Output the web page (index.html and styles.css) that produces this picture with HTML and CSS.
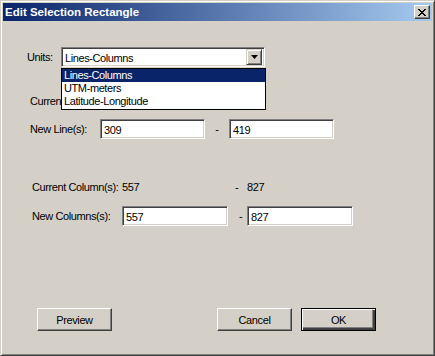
FILE: index.html
```html
<!DOCTYPE html>
<html lang="en">
  <head>
    <meta charset="UTF-8" />
    <meta name="viewport" content="width=device-width, initial-scale=1.0" />
    <title>Edit Selection Rectangle</title>
    <link rel="stylesheet" href="styles.css">
  </head>
  <body>
    <div class="window">
      <div class="titlebar">
        <span class="title">Edit Selection Rectangle</span>
        <button class="close">
          <svg width="8" height="7" viewBox="0 0 8 7">
            <path d="M0 0h2v1h1v1h2v-1h1v-1h2v1h-1v1h-1v1h-1v1h1v1h1v1h1v1h-2v-1h-1v-1h-2v1h-1v1h-2v-1h1v-1h1v-1h1v-1h-1v-1h-1v-1h-1z" fill="#000"/>
          </svg>
        </button>
      </div>

      <div class="content">
        <div class="row units-row">
          <span class="lbl units-lbl">Units:</span>
          <div class="combo">
            <div class="field combo-field">
              <span class="combo-text">Lines-Columns</span>
              <span class="combo-btn">
                <svg width="7" height="4" viewBox="0 0 7 4"><path d="M0 0h7l-3.5 4z" fill="#000"/></svg>
              </span>
            </div>
            <ul class="combo-list">
              <li class="sel">Lines-Columns</li>
              <li>UTM-meters</li>
              <li>Latitude-Longitude</li>
            </ul>
          </div>
        </div>

        <!-- ligger under den åbne liste, kun starten kan ses -->
        <div class="row info line-info">
          <span class="lbl">Current Line(s):</span>
        </div>

        <div class="row edit line-edit">
          <span class="lbl">New Line(s):</span>
          <input class="field" type="text" value="309">
          <span class="dash">-</span>
          <input class="field" type="text" value="419">
        </div>

        <div class="row info col-info">
          <span class="lbl">Current Column(s):</span>
          <span class="val">557</span>
          <span class="dash">-</span>
          <span>827</span>
        </div>

        <div class="row edit col-edit">
          <span class="lbl">New Columns(s):</span>
          <input class="field" type="text" value="557">
          <span class="dash">-</span>
          <input class="field" type="text" value="827">
        </div>

        <div class="row buttons">
          <button class="btn preview">Preview</button>
          <button class="btn cancel">Cancel</button>
          <button class="btn ok">OK</button>
        </div>
      </div>
    </div>
  </body>
</html>
```

FILE: styles.css
```css
* {
  box-sizing: border-box;
}
body {
  margin: 0;
  background: #d4d0c8;
  font-family: "Liberation Sans", Arial, sans-serif;
  font-size: 11px;
  letter-spacing: -0.4px;
  color: #000;
}

.window {
  width: 435px;
  height: 356px;
  padding: 2px;
  background: #d4d0c8;
  border: 1px solid;
  border-color: #d4d0c8 #404040 #404040 #d4d0c8;
  box-shadow: inset 1px 1px #fff, inset -1px -1px #808080;
}

.titlebar {
  height: 18px;
  display: flex;
  align-items: center;
  justify-content: space-between;
  padding: 0 2px 0 2px;
  background: linear-gradient(to right, #0a246a, #a6caf0);
}
.title {
  color: #fff;
  font-weight: bold;
  font-size: 11.5px;
  letter-spacing: 0;
}
.close {
  width: 16px;
  height: 14px;
  padding: 0;
  margin: 0;
  display: flex;
  align-items: center;
  justify-content: center;
  background: #d4d0c8;
  border: 1px solid;
  border-color: #fff #404040 #404040 #fff;
  box-shadow: inset -1px -1px #808080;
}

.content {
  padding-top: 26px;
}

.row {
  display: flex;
  align-items: center;
}
.row > * {
  flex-shrink: 0;
  white-space: nowrap;
}

.field {
  height: 20px;
  background: #fff;
  border: 1px solid;
  border-color: #808080 #fff #fff #808080;
  box-shadow: inset 1px 1px #404040, inset -1px -1px #d4d0c8;
  font-family: inherit;
  font-size: 11px;
  letter-spacing: inherit;
  color: #000;
  padding: 1px 2px 0 3px;
  margin: 0;
  outline: none;
}

/* units combo */
.units-row {
  padding-left: 24px;
  height: 20px;
}
.units-lbl {
  width: 34px;
}
.combo {
  position: relative;
  width: 204px;
}
.combo-field {
  display: flex;
  align-items: center;
  justify-content: space-between;
  padding: 2px 2px 0 3px;
}
.combo-btn {
  width: 16px;
  height: 16px;
  margin-top: -2px;
  display: flex;
  align-items: center;
  justify-content: center;
  background: #d4d0c8;
  border: 1px solid;
  border-color: #d4d0c8 #404040 #404040 #d4d0c8;
  box-shadow: inset 1px 1px #fff, inset -1px -1px #808080;
}
.combo-list {
  position: absolute;
  top: 21px;
  left: 0;
  width: 205px;
  margin: 0;
  padding: 0 0 1px 0;
  list-style: none;
  background: #fff;
  border: 1px solid #000;
  z-index: 2;
}
.combo-list li {
  height: 13px;
  line-height: 13px;
  padding-left: 2px;
}
.combo-list .sel {
  background: #0a246a;
  color: #fff;
}

/* current / new values */
.info {
  height: 14px;
}
.line-info {
  margin-top: 27px;
  padding-left: 27px;
}
.line-info .lbl {
  width: 31px;
  overflow: hidden;
}
.line-edit {
  margin-top: 11px;
  padding-left: 27px;
  height: 20px;
}
.line-edit .lbl {
  width: 70px;
}
.line-edit .field {
  width: 105px;
}
.line-edit .dash {
  width: 24px;
  text-align: center;
}

.col-info {
  margin-top: 41px;
  padding-left: 29px;
}
.col-info .lbl {
  width: 90px;
}
.col-info .val {
  width: 113px;
}
.col-info .dash {
  width: 12px;
}

.col-edit {
  margin-top: 12px;
  padding-left: 29px;
  height: 20px;
}
.col-edit .lbl {
  width: 90px;
}
.col-edit .field {
  width: 106px;
}
.col-edit .dash {
  width: 19px;
  padding-left: 11px;
}

/* buttons */
.buttons {
  margin-top: 82px;
  padding-left: 34px;
}
.btn {
  width: 75px;
  height: 23px;
  padding: 0;
  font-family: inherit;
  font-size: 11px;
  letter-spacing: inherit;
  color: #000;
  background: #d4d0c8;
  border: 1px solid;
  border-color: #fff #404040 #404040 #fff;
  box-shadow: inset -1px -1px #808080;
}
.cancel {
  margin-left: 105px;
}
.ok {
  margin-left: 9px;
  border-color: #000;
  box-shadow: inset 1px 1px #fff, inset -2px -2px #404040, inset -3px -3px #808080;
}
```
